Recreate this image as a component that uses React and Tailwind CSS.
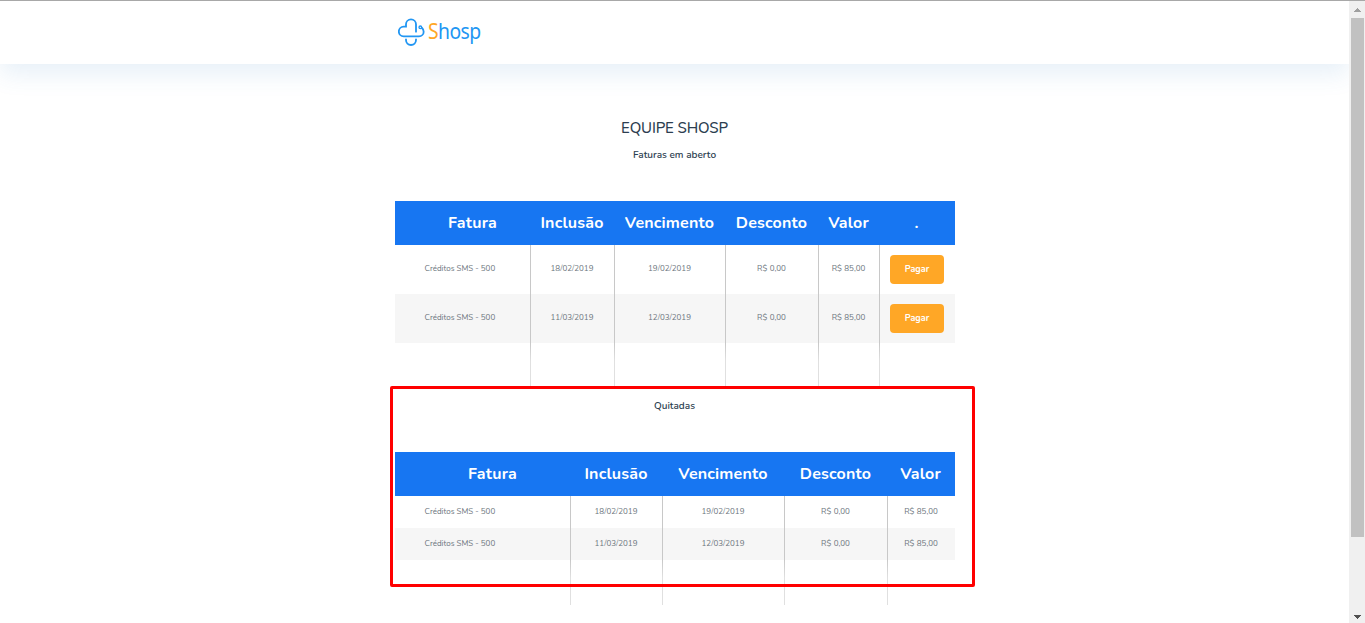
import React from "react";

const openInvoices = [
  { name: "Créditos SMS - 500", created: "18/02/2019", due: "19/02/2019", discount: "R$ 0,00", value: "R$ 85,00" },
  { name: "Créditos SMS - 500", created: "11/03/2019", due: "12/03/2019", discount: "R$ 0,00", value: "R$ 85,00" },
];

const paidInvoices = [...openInvoices];

const Logo = () => (
  <div className="flex h-[30px] items-center">
    <svg width="28" height="30" viewBox="0 0 84 90" fill="none" stroke="#2196f3" strokeWidth="5.500" strokeLinecap="round">
      <path d="M54 47V25a15 15 0 0 0-30 0v7h-7a14.500 14.500 0 0 0 0 29h46a14 14 0 0 0 14-14c0-5-2-8-5-11" />
      <circle cx="67" cy="34" r="4" strokeWidth="4" />
      <path d="M24 70v2a15 15 0 0 0 30 0v-2" />
    </svg>
    <span className="ml-[2px] origin-left scale-x-92 font-['Noto_Sans',sans-serif] text-[21px] leading-[30px] tracking-[-0.6px] text-[#2196f3]">
      <span className="text-[#ffa726]">S</span>hosp
    </span>
  </div>
);

const HeadCell = ({ children, className = "pr-[2px]" }) => (
  <th className={`py-0 text-center text-[16px] font-bold tracking-[0.2px] text-white ${className}`}>{children}</th>
);

const Cell = ({ children }) => (
  <td className="border-r border-[#c8c8c8] p-0 pr-px pb-px text-center text-[8px] whitespace-nowrap text-[#6c757d] [word-spacing:0.4px] last:border-r-0">
    {children}
  </td>
);

const InvoiceTable = ({ invoices, widths, payable }) => (
  <table className="w-[560px] table-fixed border-separate border-spacing-0">
    <colgroup>
      {widths.map((w, i) => <col key={i} style={{ width: w }} />)}
    </colgroup>
    <thead>
      <tr className="h-[44px] bg-[#1776f2]">
        <HeadCell className="pl-[19px]">Fatura</HeadCell>
        <HeadCell>Inclusão</HeadCell>
        <HeadCell>Vencimento</HeadCell>
        <HeadCell>Desconto</HeadCell>
        <HeadCell>Valor</HeadCell>
        {payable && <HeadCell>.</HeadCell>}
      </tr>
    </thead>
    <tbody>
      {invoices.map((invoice, i) => (
        <tr key={i} className={payable ? "h-[49px] even:bg-[#f6f6f6]" : "h-[32px] even:bg-[#f6f6f6]"}>
          <td className="border-r border-[#c8c8c8] p-0 pb-px pl-[29.500px] text-left text-[8px] text-[#6c757d]">{invoice.name}</td>
          <Cell>{invoice.created}</Cell>
          <Cell>{invoice.due}</Cell>
          <Cell>{invoice.discount}</Cell>
          <Cell>{invoice.value}</Cell>
          {payable && (
            <td className="p-0">
              <button className="ml-[10px] block h-[29px] w-[54px] rounded-[4px] bg-[#ffa726] text-[9px] font-bold text-white">
                Pagar
              </button>
            </td>
          )}
        </tr>
      ))}
      {/* spacer row, the column lines fade out here */}
      <tr className="h-[45px]">
        {widths.map((w, i) => (
          <td key={i} className="p-0">
            {i < widths.length - 1 && (
              <div className="ml-auto h-[45px] w-px bg-linear-to-b from-[#c8c8c8] to-[#e0e0e0] to-[18px]" />
            )}
          </td>
        ))}
      </tr>
    </tbody>
  </table>
);

const Scrollbar = () => (
  <div className="flex w-[16px] shrink-0 flex-col items-center justify-between bg-[#f0f0f0]">
    <svg width="16" height="17" viewBox="0 0 16 17" shapeRendering="crispEdges">
      <path d="M5 11h7v-1h-1v-1h-1v-1h-1v-1h-1v1h-1v1h-1v1h-1z" fill="#a0a0a0" />
    </svg>
    <div className="mb-auto ml-px h-[519px] w-[13px] bg-[#c1c1c1]" />
    <svg width="16" height="17" viewBox="0 0 16 17" shapeRendering="crispEdges">
      <path d="M5 9h7v1h-1v1h-1v1h-1v1h-1v-1h-1v-1h-1v-1h-1z" fill="#505050" />
    </svg>
  </div>
);

export default function App() {
  return (
    <div className="flex h-[623px] w-[1365px] flex-col overflow-hidden bg-white font-[Nunito,'Open_Sans',sans-serif]">
      <div className="h-px shrink-0 bg-[#a8a8a8]" />
      <div className="flex min-h-0 flex-1">
        <div className="min-w-0 flex-1 overflow-hidden">
          <header className="h-[63px] pt-[15px] pl-[398px] shadow-[0_10px_25px_rgba(60,130,200,0.12)]">
            <Logo />
          </header>
          <main className="relative ml-[395px] flex w-[560px] flex-col items-center text-[#2c3e50]">
            <h1 className="mt-[54px] pr-px text-[15px] leading-[20px] font-medium tracking-[-0.15px]">EQUIPE SHOSP</h1>
            <h2 className="mt-[9px] mb-[38px] pr-px text-[10px] leading-[16px] font-semibold">Faturas em aberto</h2>
            <InvoiceTable invoices={openInvoices} widths={[136, 84, 111, 93, 61, 75]} payable />
            <h2 className="mt-[10px] mb-[38px] pr-px text-[10px] leading-[16px] font-semibold">Quitadas</h2>
            <InvoiceTable invoices={paidInvoices} widths={[176, 92, 122, 103, 67]} />
            {/* highlight around the paid invoices */}
            <div className="absolute top-[322px] left-[-5px] h-[201px] w-[585px] rounded-[2px] border-[3px] border-[#ff0000]" />
          </main>
        </div>
        <Scrollbar />
      </div>
    </div>
  );
}
